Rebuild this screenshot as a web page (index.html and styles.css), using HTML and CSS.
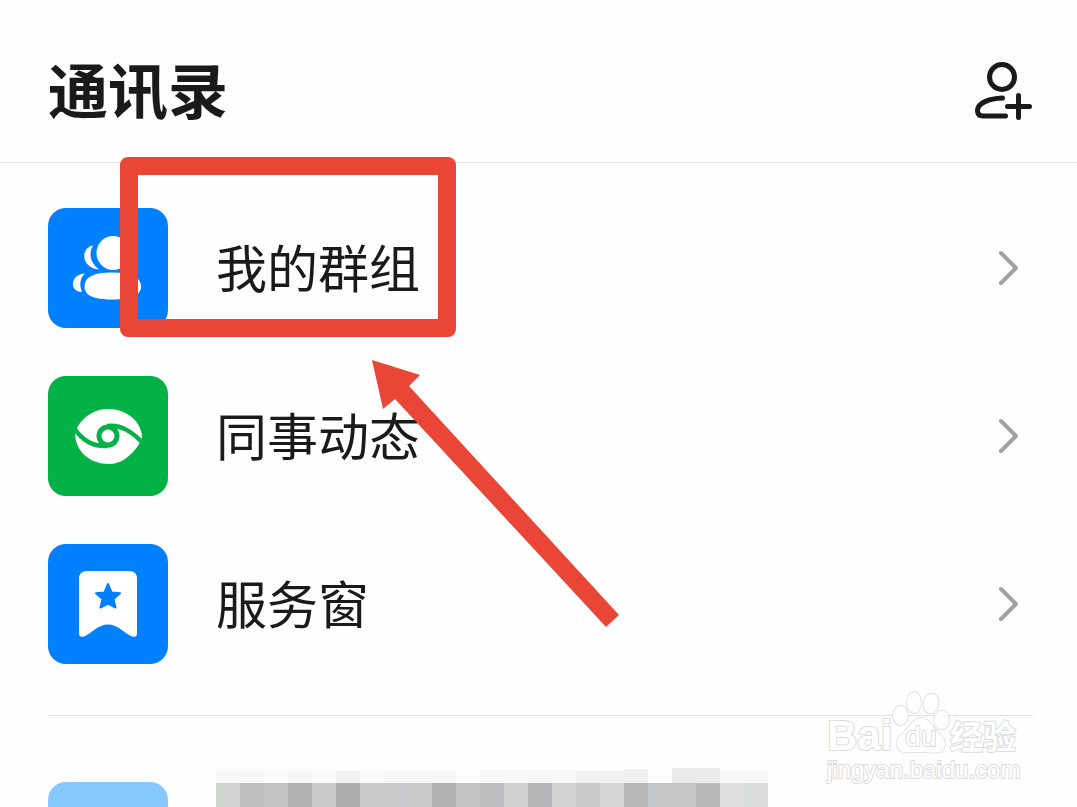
FILE: index.html
```html
<!DOCTYPE html>
<html lang="zh-CN">
<head>
<meta charset="utf-8">
<meta name="viewport" content="width=device-width, initial-scale=1">
<title>通讯录</title>
<link rel="stylesheet" href="styles.css">
</head>
<body>
<div class="screen">
  <header class="header">
    <h1 class="title">通讯录</h1>
    <button class="add" type="button" aria-label="添加联系人">
      <svg width="60" height="60" viewBox="0 0 60 60" fill="none" stroke="#1a1a1a" stroke-width="5" stroke-linecap="round" stroke-linejoin="round">
        <ellipse cx="30" cy="17" rx="12.500" ry="12.500"/>
        <path d="M30.500 38C17 38.500 5.500 43 5.500 50.500C5.500 54 7.500 56 11 56H33.500"/>
        <path d="M35.500 46.500H57.500M46.500 35.500V57.500"/>
      </svg>
    </button>
  </header>

  <nav class="list">
    <a class="row" href="#groups">
      <svg class="tile tile-blue" viewBox="0 0 120 120" fill="#fff">
        <path d="M45 37.500C32 40 33 60 51 61.500C42 54 40.500 46 45 37.500Z"/>
        <path d="M37 65.500C22 66 21 84 34 84C31 77 32 70 37 65.500Z"/>
        <ellipse cx="65" cy="45" rx="16.500" ry="17"/>
        <path d="M64 64.500C83 64.500 93 69 93 79C93 87 83 91.500 64 91.500C45 91.500 36.500 87 36.500 79C36.500 69 45 64.500 64 64.500Z"/>
      </svg>
      <span class="label">我的群组</span>
      <svg class="chevron" viewBox="0 0 24 40"><path d="M5 5L20 20L5 35"/></svg>
    </a>
    <a class="row" href="#colleagues">
      <svg class="tile tile-green" viewBox="0 0 120 120">
        <path d="M30 50C37 39 48 33 60 33C79 33 94 46 94 62L90.500 69C83 80 73 88 61 88C42 88 28 76 27 58Z" fill="#fff"/>
        <path d="M26 52C34 64 46 71 60 70M59 50C73 48 84 56 95 67" fill="none" stroke="#04b146" stroke-width="4.500"/>
        <circle cx="60" cy="60" r="11.500" fill="#04b146"/>
        <circle cx="60" cy="60" r="6.500" fill="#fff"/>
      </svg>
      <span class="label">同事动态</span>
      <svg class="chevron" viewBox="0 0 24 40"><path d="M5 5L20 20L5 35"/></svg>
    </a>
    <a class="row" href="#services">
      <svg class="tile tile-blue" viewBox="0 0 120 120">
        <path d="M39 27H81Q89 27 89 35V89Q89 94 84 92.500C76 89 70 80.500 60 80.500C50 80.500 44 89 36 92.500Q31 94 31 89V35Q31 27 39 27Z" fill="#fff"/>
        <path d="M60 40L63.500 48.500L72 49.300L65.500 55L67.500 63.500L60 59.500L52.500 63.500L54.500 55L48 49.300L56.500 48.500Z" fill="#0080ff" stroke="#0080ff" stroke-width="2" stroke-linejoin="round"/>
      </svg>
      <span class="label">服务窗</span>
      <svg class="chevron" viewBox="0 0 24 40"><path d="M5 5L20 20L5 35"/></svg>
    </a>
  </nav>

  <section class="team">
    <span class="avatar"></span>
    <svg class="mosaic" width="552" height="40" viewBox="0 0 552 40" shape-rendering="crispEdges" aria-hidden="true">
      <path fill="#f7f7f7" d="M0 0H48V14H0ZM72 0H96V14H72ZM168 2H240V14H168ZM264 1H360V14H264ZM480 2H552V14H480Z"/>
      <path fill="#fbfbfb" d="M48 2H72V14H48ZM96 3H120V14H96ZM144 3H168V14H144Z"/>
      <path fill="#f1f1f1" d="M120 2H144V14H120ZM360 2H408V14H360ZM408 0H432V14H408Z"/>
      <path fill="#e9ebea" d="M456 -1H504V14H456Z"/>
      <path fill="#d1d3d1" d="M0 14H24V40H0Z"/><path fill="#bebfc1" d="M24 14H48V40H24Z"/>
      <path fill="#c5c4c3" d="M48 14H72V40H48Z"/><path fill="#b1b2b3" d="M72 14H96V40H72Z"/>
      <path fill="#c9cacc" d="M96 14H120V40H96Z"/><path fill="#adaeb0" d="M120 14H144V40H120Z"/>
      <path fill="#c9cacc" d="M144 14H192V40H144Z"/><path fill="#c9cbca" d="M192 14H216V40H192Z"/>
      <path fill="#b1b2b4" d="M216 14H240V40H216Z"/><path fill="#c3c4c6" d="M240 14H264V40H240Z"/>
      <path fill="#bcbdbf" d="M264 14H288V40H264Z"/><path fill="#cfd1d0" d="M288 14H312V40H288Z"/>
      <path fill="#b5b6b8" d="M312 14H336V40H312Z"/><path fill="#d1d2d2" d="M336 14H360V40H336Z"/>
      <path fill="#c9cccb" d="M360 14H384V40H360Z"/><path fill="#d3d6d5" d="M384 14H408V40H384Z"/>
      <path fill="#bab9ba" d="M408 14H432V40H408Z"/><path fill="#c3c5c7" d="M432 14H480V40H432Z"/>
      <path fill="#b8b9bb" d="M480 14H504V40H480Z"/><path fill="#dfdfdf" d="M504 14H528V40H504Z"/>
      <path fill="#dadddb" d="M528 14H552V40H528Z"/>
    </svg>
  </section>

  <div class="watermark">
    <div class="brand">
      <span class="brand-latin">Bai</span>
      <span class="paw">
        <svg width="58" height="64" viewBox="0 0 58 64" fill="#fff" stroke="#d8d8d8" stroke-width="1.500">
          <ellipse cx="8.500" cy="25.500" rx="7.500" ry="10"/>
          <ellipse cx="22" cy="12.500" rx="7" ry="10.500"/>
          <ellipse cx="39" cy="13.500" rx="7.500" ry="10" transform="rotate(12 39 13.500)"/>
          <ellipse cx="49.500" cy="30" rx="7.500" ry="9.500"/>
          <path d="M29 28C37 28 39 35 45 41C51 47 55 51 52 58C49 65 38 62 29 62C20 62 9 65 6 58C3 51 7 47 13 41C19 35 21 28 29 28Z"/>
        </svg>
        <span class="paw-text">du</span>
      </span>
      <span class="brand-cjk">经验</span>
    </div>
    <div class="site">jingyan.baidu.com</div>
  </div>

  <div class="highlight"></div>
  <svg class="arrow" width="250" height="270" viewBox="0 0 250 270" fill="#e94638" aria-hidden="true">
    <path d="M2 0L50 15L39 26L249 255L236 267L25 39L13 49Z"/>
  </svg>
</div>
</body>
</html>
```
FILE: styles.css
```css
* { box-sizing: border-box; }

body {
  margin: 0;
  background: #fefefe;
  color: #1a1a1a;
  font-family: "Noto Sans CJK SC", sans-serif;
}

.screen {
  position: relative;
  height: 100vh;
  overflow: hidden;
}

.header {
  display: flex;
  align-items: center;
  justify-content: space-between;
  padding: 46px 45px 28px 48px;
  border-bottom: 1px solid #e2e3e4;
}

.title {
  margin: 0;
  padding-bottom: 4px;
  font-size: 60px;
  line-height: 84px;
  font-weight: 700;
}

.add {
  display: flex;
  padding: 0;
  border: 0;
  background: none;
}

.list {
  margin: 0 44px 0 48px;
  padding: 21px 0 27px;
  border-bottom: 1px solid #e2e3e4;
}

.row {
  display: flex;
  align-items: center;
  gap: 48px;
  padding: 24px 13px 24px 0;
  color: inherit;
  text-decoration: none;
}

.tile {
  flex: none;
  width: 120px;
  height: 120px;
  border-radius: 18px;
}

.tile-blue { background: #0080ff; }
.tile-green { background: #04b146; }

.label {
  flex: 1;
  padding-bottom: 4px;
  font-size: 51px;
  line-height: 76px;
}

.chevron {
  flex: none;
  width: 24px;
  height: 40px;
  fill: none;
  stroke: #a2a2a2;
  stroke-width: 4;
  stroke-linecap: round;
  stroke-linejoin: round;
}

.team {
  display: flex;
  gap: 48px;
  padding: 53px 48px 0;
}

.avatar {
  flex: none;
  width: 120px;
  height: 120px;
  margin-top: 13px;
  border-radius: 18px;
  background: #86c7ff;
}

.mosaic { overflow: visible; }

.highlight {
  position: absolute;
  left: 120px;
  top: 157px;
  width: 336px;
  height: 180px;
  border: 18px solid #e94638;
  border-radius: 8px;
}

.arrow {
  position: absolute;
  left: 370px;
  top: 360px;
}

.watermark {
  position: absolute;
  left: 827px;
  top: 690px;
  color: #fff;
  font-family: "Liberation Sans", "Noto Sans CJK SC", sans-serif;
  -webkit-text-stroke: 2px #dcdcdc;
  paint-order: stroke fill;
}

.brand {
  display: flex;
  align-items: flex-end;
  height: 66px;
}

.brand-latin {
  width: 65px;
  font-size: 42px;
  line-height: 40px;
  font-weight: 700;
}

.paw {
  position: relative;
  width: 58px;
  height: 66px;
}

.paw-text {
  position: absolute;
  left: 0;
  right: 0;
  bottom: 5px;
  font-size: 28px;
  line-height: 28px;
  text-align: center;
}

.brand-cjk {
  font-size: 33px;
  line-height: 36px;
  font-weight: 700;
}

.site {
  font-size: 24px;
  line-height: 28px;
}
```
